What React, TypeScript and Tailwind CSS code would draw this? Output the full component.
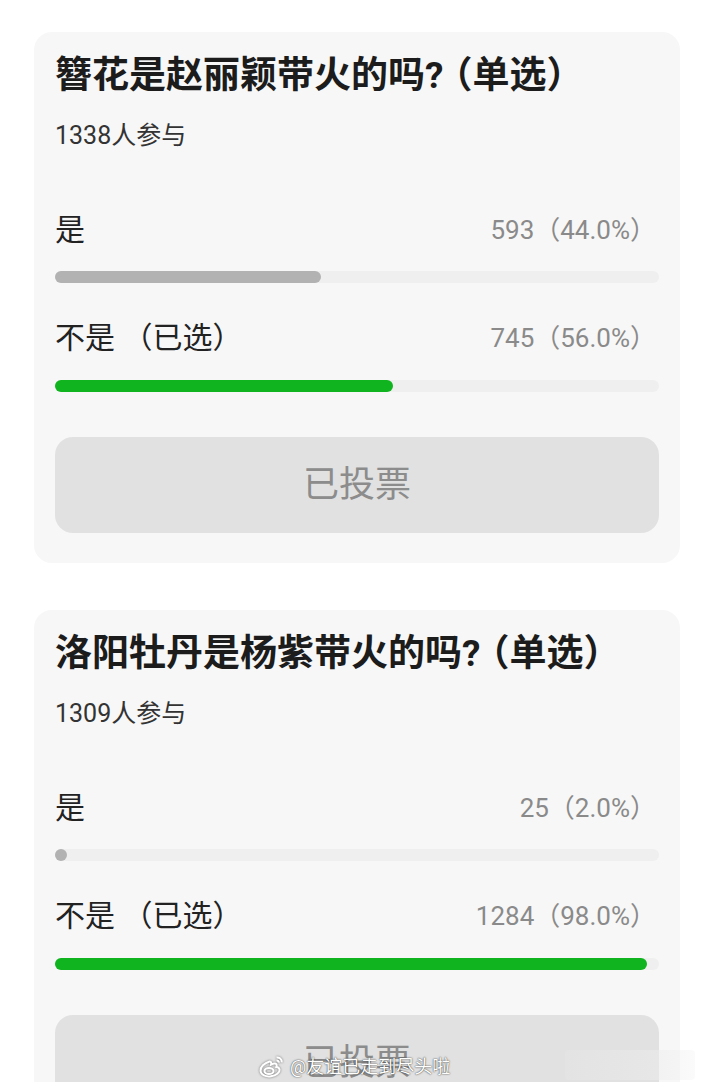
import React from "react";

type Opt = { label: string; count: string; pct: number; selected: boolean };
type Poll = { title: string; people: string; options: Opt[] };

const polls: Poll[] = [
  {
    title: "簪花是赵丽颖带火的吗?",
    people: "1338人参与",
    options: [
      { label: "是", count: "593（44.0%）", pct: 44, selected: false },
      { label: "不是 （已选）", count: "745（56.0%）", pct: 56, selected: true },
    ],
  },
  {
    title: "洛阳牡丹是杨紫带火的吗?",
    people: "1309人参与",
    options: [
      { label: "是", count: "25（2.0%）", pct: 2, selected: false },
      { label: "不是 （已选）", count: "1284（98.0%）", pct: 98, selected: true },
    ],
  },
];

const font = "font-['Roboto','Noto_Sans_CJK_SC',sans-serif]";

function PollCard({ poll }: { poll: Poll }) {
  return (
    <div className="ml-[34px] w-[646px] shrink-0 rounded-[18px] bg-[#f7f7f7] px-[21px] pt-[22px] pb-[30px]">
      <div className="text-[37px] leading-[44px] font-bold text-[#1c1c1c] whitespace-nowrap">
        {poll.title}
        <span className="ml-[-8px]">（单选）</span>
      </div>
      <div className="mt-[23px] text-[25px] leading-[30px] text-[#333]">{poll.people}</div>
      <div className="mt-[61px] flex flex-col">
        {poll.options.map((o, i) => (
          <div key={i} className={i > 0 ? "mt-[37px]" : ""}>
            <div className="flex items-center justify-between">
              <span className="text-[30px] leading-[36px] text-[#222]">{o.label}</span>
              <span className="mr-[3px] text-[26px] leading-[30px] text-[#8a8a8a]">{o.count}</span>
            </div>
            <div className={i > 0 ? "mt-[24px] h-[12px] w-full rounded-full bg-[#efefef]" : "mt-[23px] h-[12px] w-full rounded-full bg-[#efefef]"}>
              <div
                className={o.selected ? "h-full rounded-full bg-[#0fb41e]" : "h-full rounded-full bg-[#b2b2b2]"}
                style={{ width: `${Math.max(o.pct, 1.8)}%` }}
              />
            </div>
          </div>
        ))}
      </div>
      <div className="mt-[45px] flex h-[96px] items-center justify-center rounded-[18px] bg-[#e1e1e1]">
        <span className="text-[36px] text-[#8c8c8c]">已投票</span>
      </div>
    </div>
  );
}

function WeiboLogo() {
  return (
    <svg width="28" height="24" viewBox="0 0 28 24" fill="none" stroke="#ffffff" strokeWidth="2" style={{ filter: "drop-shadow(0 0 1px rgba(0,0,0,0.5))" }}>
      <path d="M11.5 6.5C6.5 8 2 12 2.5 16c.5 4 5.5 6 10.5 5.2 5-.8 9-3.6 8.6-6.6-.3-2-2.3-2.6-3.3-2.7.6-1.4.7-3-1.2-3.3-1.2-.2-3 .5-4 1 .4-1.5.1-3.4-1.6-3.1Z" />
      <ellipse cx="11" cy="16" rx="4.5" ry="3" />
      <path d="M18.5 2.5c2.6-.5 5.5 1.6 5.2 4.8" />
      <path d="M18.5 5.6c1.2-.2 2.4.6 2.3 2" />
    </svg>
  );
}

export default function App() {
  return (
    <div className={`relative h-[1082px] w-[708px] overflow-hidden bg-white ${font}`}>
      <div className="flex flex-col gap-[47px] pt-[32px]">
        {polls.map((p, i) => (
          <PollCard key={i} poll={p} />
        ))}
      </div>
      <div className="absolute left-[258px] top-[1055px] flex items-center gap-[4px]">
        <WeiboLogo />
        <span
          className="text-[18px] leading-[24px] text-white"
          style={{ textShadow: "0 0 2px rgba(0,0,0,0.55), 0 0 1px rgba(0,0,0,0.6)" }}
        >
          @友谊已走到尽头啦
        </span>
      </div>
      <div className="absolute left-[565px] top-[1050px] h-[30px] w-[130px] rounded-[4px] bg-gradient-to-r from-[#e4e4e4]/70 to-[#f4f4f4]/40" />
    </div>
  );
}
